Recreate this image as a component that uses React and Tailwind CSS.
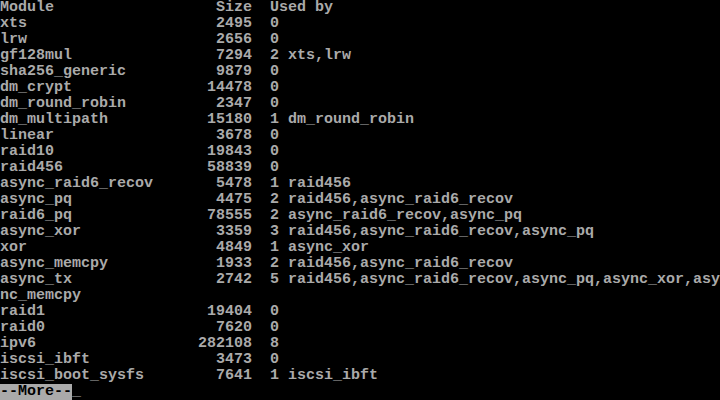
import React from 'react';

const modules = [
  ['xts', 2495, 0, ''],
  ['lrw', 2656, 0, ''],
  ['gf128mul', 7294, 2, 'xts,lrw'],
  ['sha256_generic', 9879, 0, ''],
  ['dm_crypt', 14478, 0, ''],
  ['dm_round_robin', 2347, 0, ''],
  ['dm_multipath', 15180, 1, 'dm_round_robin'],
  ['linear', 3678, 0, ''],
  ['raid10', 19843, 0, ''],
  ['raid456', 58839, 0, ''],
  ['async_raid6_recov', 5478, 1, 'raid456'],
  ['async_pq', 4475, 2, 'raid456,async_raid6_recov'],
  ['raid6_pq', 78555, 2, 'async_raid6_recov,async_pq'],
  ['async_xor', 3359, 3, 'raid456,async_raid6_recov,async_pq'],
  ['xor', 4849, 1, 'async_xor'],
  ['async_memcpy', 1933, 2, 'raid456,async_raid6_recov'],
  ['async_tx', 2742, 5, 'raid456,async_raid6_recov,async_pq,async_xor,async_memcpy'],
  ['raid1', 19404, 0, ''],
  ['raid0', 7620, 0, ''],
  ['ipv6', 282108, 8, ''],
  ['iscsi_ibft', 3473, 0, ''],
  ['iscsi_boot_sysfs', 7641, 1, 'iscsi_ibft'],
];

// lsmod style: name padded to 19, size right aligned in 8, two spaces, count
const formatLine = ([name, size, count, usedBy]) => {
  let line = name.padEnd(19) + ' ' + String(size).padStart(8) + '  ' + count;
  if (usedBy) line += ' ' + usedBy;
  return line;
};

const App = () => {
  // wrap at 80 columns like the console does
  const lines = ['Module                  Size  Used by'];
  modules.forEach((m) => {
    let line = formatLine(m);
    while (line.length > 80) {
      lines.push(line.slice(0, 80));
      line = line.slice(80);
    }
    lines.push(line);
  });

  return (
    <div className="w-[720px] h-[400px] bg-black text-[#aaaaaa] font-['Liberation_Mono',monospace] font-bold text-[15px] leading-4 overflow-hidden">
      {lines.map((line, i) => (
        <div key={i} className="h-4 whitespace-pre">
          {line}
        </div>
      ))}
      <div className="h-4 whitespace-pre flex">
        <span className="bg-[#aaaaaa] text-black">--More--</span>
        <span>_</span>
      </div>
    </div>
  );
};

export default App;
